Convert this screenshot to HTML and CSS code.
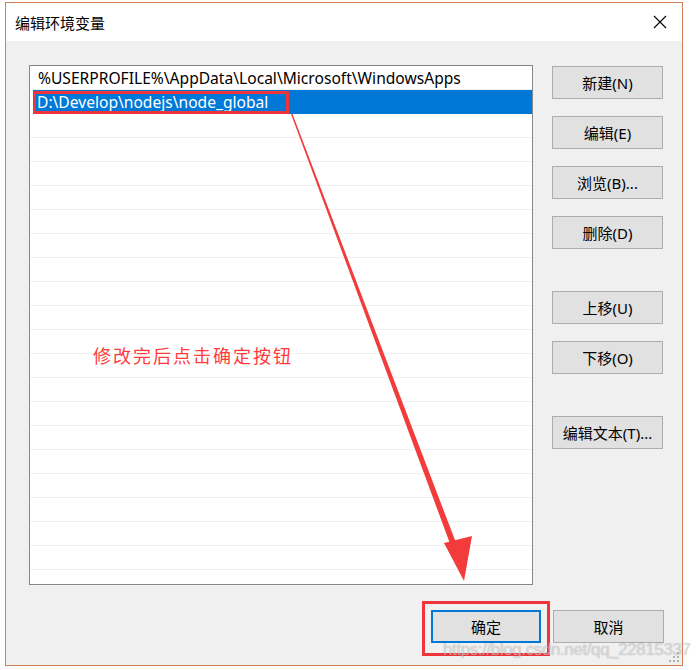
FILE: index.html
```html
<!DOCTYPE html>
<html lang="zh-CN">
<head>
    <meta charset="UTF-8">
    <title>编辑环境变量</title>
    <link rel="stylesheet" href="styles.css">
</head>
<body>
    <div class="window">
        <!-- Заголовок окна -->
        <div class="titlebar">
            <span class="title">编辑环境变量</span>
            <svg class="close" width="14" height="14" viewBox="0 0 14 14">
                <path d="M1 1 L13 13 M13 1 L1 13" stroke="#000" stroke-width="1.1" fill="none"/>
            </svg>
        </div>

        <div class="content">
            <div class="main">
                <!-- Список путей -->
                <div class="list">
                    <div class="row">%USERPROFILE%\AppData\Local\Microsoft\WindowsApps</div>
                    <div class="row selected">D:\Develop\nodejs\node_global</div>
                    <div class="row"></div><div class="row"></div><div class="row"></div>
                    <div class="row"></div><div class="row"></div><div class="row"></div>
                    <div class="row"></div><div class="row"></div><div class="row"></div>
                    <div class="row"></div><div class="row"></div><div class="row"></div>
                    <div class="row"></div><div class="row"></div><div class="row"></div>
                    <div class="row"></div><div class="row"></div><div class="row"></div>
                    <div class="row"></div><div class="row"></div>
                    <div class="note">修改完后点击确定按钮</div>
                </div>

                <!-- Кнопки справа -->
                <div class="side-buttons">
                    <button class="btn">新建(N)</button>
                    <button class="btn">编辑(E)</button>
                    <button class="btn">浏览(B)...</button>
                    <button class="btn">删除(D)</button>
                    <button class="btn gap-before">上移(U)</button>
                    <button class="btn">下移(O)</button>
                    <button class="btn gap-before">编辑文本(T)...</button>
                </div>
            </div>

            <!-- Нижние кнопки -->
            <div class="footer">
                <button class="btn ok">确定</button>
                <button class="btn">取消</button>
            </div>
        </div>

        <svg class="grip" width="10" height="10" viewBox="0 0 10 10">
            <rect x="8" y="0" width="2" height="2" fill="#b0b0b0"/>
            <rect x="4" y="4" width="2" height="2" fill="#b0b0b0"/>
            <rect x="8" y="4" width="2" height="2" fill="#b0b0b0"/>
            <rect x="0" y="8" width="2" height="2" fill="#b0b0b0"/>
            <rect x="4" y="8" width="2" height="2" fill="#b0b0b0"/>
            <rect x="8" y="8" width="2" height="2" fill="#b0b0b0"/>
        </svg>

        <!-- Стрелка-пометка -->
        <svg class="arrow" width="678" height="664" viewBox="0 0 678 664">
            <polygon points="285,111 286.5,111 452,545 446,546" fill="#f23c3c"/>
            <polygon points="438,540 466,533 458,578" fill="#f23c3c"/>
        </svg>
    </div>

    <div class="watermark">https://blog.csdn.net/qq_22815337</div>
</body>
</html>
```

FILE: styles.css
```css
body {
    margin: 0;
    padding: 2px 0 0 5px;
    background: #ffffff;
    font-family: "Noto Sans", "Noto Sans CJK SC", sans-serif;
    position: relative;
    height: 670px;
    box-sizing: border-box;
    overflow: hidden;
}

.window {
    position: relative;
    width: 678px;
    height: 664px;
    box-sizing: border-box;
    border: 1px solid #d27f58;
    display: flex;
    flex-direction: column;
    overflow: hidden;
}

/* Заголовок */
.titlebar {
    height: 38px;
    background: #ffffff;
    display: flex;
    align-items: center;
    justify-content: space-between;
    padding: 0 15px 0 9px;
}

.title {
    font-family: "Noto Sans CJK SC", sans-serif;
    font-size: 15px;
    color: #000000;
}

.content {
    flex: 1;
    background: #f0f0f0;
    padding: 24px 18px 0 23px;
    display: flex;
    flex-direction: column;
}

.main {
    display: flex;
    gap: 19px;
}

/* Список */
.list {
    position: relative;
    width: 504px;
    height: 520px;
    box-sizing: border-box;
    border: 1px solid #828790;
    background: #ffffff;
    overflow: hidden;
}

.row {
    height: 24px;
    box-sizing: border-box;
    border-bottom: 1px solid #f0f0f0;
    padding-left: 8px;
    padding-top: 1px;
    font-size: 15.6px;
    line-height: 23px;
    color: #000000;
    white-space: nowrap;
}

.row.selected {
    position: relative;
    background: #0078d7;
    color: #ffffff;
    margin-left: 3px;
    padding-left: 4px;
    border-bottom-color: #0078d7;
}

.row.selected::after {
    content: "";
    position: absolute;
    left: 0;
    top: 1px;
    width: 256px;
    height: 23px;
    box-sizing: border-box;
    border: 3px solid #f0343c;
}

.note {
    position: absolute;
    left: 63px;
    top: 276px;
    font-family: "Noto Sans CJK SC", sans-serif;
    font-size: 18px;
    letter-spacing: 2px;
    color: #ff3b3b;
}

/* Кнопки */
.side-buttons {
    display: flex;
    flex-direction: column;
    gap: 17px;
    padding-top: 1px;
}

.btn {
    width: 111px;
    height: 33px;
    box-sizing: border-box;
    background: #e1e1e1;
    border: 1px solid #adadad;
    font-family: "Noto Sans", "Noto Sans CJK SC", sans-serif;
    font-size: 15px;
    color: #000000;
    padding: 0;
}

.btn.gap-before {
    margin-top: 25px;
}

.footer {
    display: flex;
    justify-content: flex-end;
    gap: 12px;
    margin-top: 25px;
}

.btn.ok {
    position: relative;
    width: 110px;
    border: 2px solid #0078d7;
}

.btn.ok::after {
    content: "";
    position: absolute;
    left: -11px;
    top: -11px;
    right: -11px;
    bottom: -15px;
    border: 3px solid #f0343c;
}

.watermark {
    position: absolute;
    left: 443px;
    top: 640px;
    font-family: "Liberation Sans", sans-serif;
    font-size: 17px;
    letter-spacing: -0.4px;
    color: rgba(255, 255, 255, 0.55);
    text-shadow: 0 0 1px rgba(0, 0, 0, 0.35);
    white-space: nowrap;
}

.grip {
    position: absolute;
    right: 3px;
    bottom: 3px;
}

.arrow {
    position: absolute;
    left: 0;
    top: 0;
    pointer-events: none;
}
```
